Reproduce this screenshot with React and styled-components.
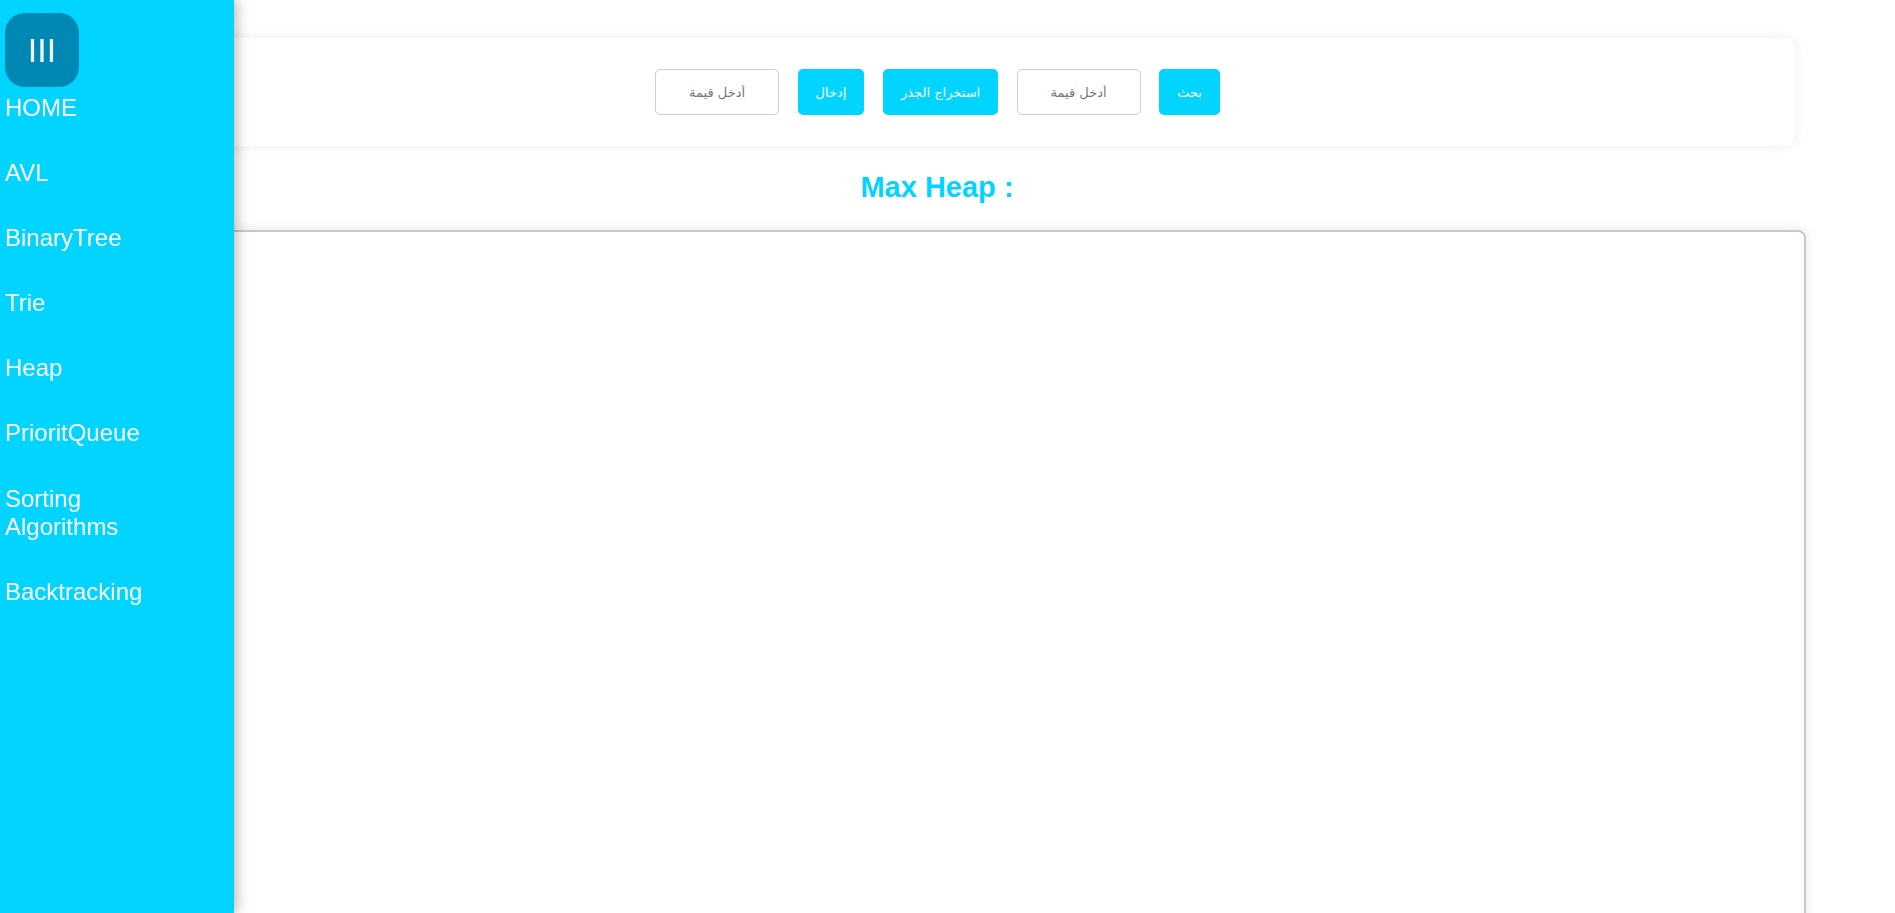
import React, { useState } from "react";
import styled, { createGlobalStyle } from "styled-components";

const GlobalStyle = createGlobalStyle`
  html, body {
    margin: 0;
    padding: 0;
    background: #fff;
    font-family: "Liberation Sans", Arial, "DejaVu Sans", sans-serif;
  }
  ::-webkit-scrollbar {
    width: 5px;
  }
  ::-webkit-scrollbar-track {
    background: #fff;
  }
  ::-webkit-scrollbar-thumb {
    background: #8a8a8a;
    border-radius: 3px;
  }
`;

const Sidebar = styled.aside`
  position: fixed;
  top: 0;
  left: 0;
  width: 234px;
  height: 100vh;
  background: #00d4ff;
  box-shadow: 3px 0 12px rgba(0, 0, 0, 0.28);
  padding: 13px 0 0 5px;
  box-sizing: border-box;
  z-index: 10;
`;

const MenuButton = styled.button`
  width: 74px;
  height: 74px;
  border: none;
  border-radius: 20px;
  background: #0088b4;
  color: #f4fbff;
  font-family: "Liberation Sans", Arial, sans-serif;
  font-size: 34px;
  line-height: 1;
  padding: 0;
  cursor: pointer;
  display: flex;
  align-items: center;
  justify-content: center;
`;

const NavList = styled.ul`
  list-style: none;
  margin: 7px 0 0;
  padding: 0;
  width: 170px;
  display: flex;
  flex-direction: column;
  gap: 36.3px;
`;

const NavLink = styled.a`
  display: block;
  color: #fff;
  font-size: 24px;
  line-height: 1.2;
  text-decoration: none;
  cursor: pointer;
`;

const Main = styled.main`
  padding: 38px 0 50px;
`;

const Toolbar = styled.div`
  margin: 0 100px 0 80px;
  padding: 31px 0 31px;
  background: #fff;
  border-radius: 10px;
  box-shadow: 0 0 12px rgba(0, 0, 0, 0.08);
  display: flex;
  justify-content: center;
  gap: 18.5px;
  direction: rtl;
`;

const ActionButton = styled.button`
  height: 46px;
  padding: 0 18px;
  border: none;
  border-radius: 5px;
  background: #00d4ff;
  color: #fff;
  font-family: "DejaVu Sans", "Liberation Sans", sans-serif;
  font-size: 13px;
  cursor: pointer;
`;

const ValueInput = styled.input`
  width: 124px;
  height: 46px;
  box-sizing: border-box;
  border: 1px solid #cfcfcf;
  border-radius: 5px;
  text-align: center;
  font-family: "DejaVu Sans", "Liberation Sans", sans-serif;
  font-size: 13px;
  color: #333;
  outline: none;
  &::placeholder {
    color: #777;
  }
`;

const Board = styled.section`
  margin: 0 89px 0 68px;
`;

const Heading = styled.h2`
  margin: 25px 0 26px;
  text-align: center;
  color: #00d4ff;
  font-size: 29px;
  font-weight: bold;
`;

const Canvas = styled.div`
  height: 2080px;
  border: 2px solid #c9c9c9;
  border-radius: 8px;
  box-shadow: 0 0 12px rgba(0, 0, 0, 0.1);
  background: #fff;
`;

const links = [
  "HOME",
  "AVL",
  "BinaryTree",
  "Trie",
  "Heap",
  "PrioritQueue",
  "Sorting Algorithms",
  "Backtracking",
];

const App = () => {
  const [searchValue, setSearchValue] = useState("");
  const [insertValue, setInsertValue] = useState("");

  return (
    <>
      <GlobalStyle />
      <Sidebar>
        <MenuButton>III</MenuButton>
        <NavList>
          {links.map((link) => (
            <li key={link}>
              <NavLink>{link}</NavLink>
            </li>
          ))}
        </NavList>
      </Sidebar>

      <Main>
        <Toolbar>
          <ActionButton>بحث</ActionButton>
          <ValueInput
            placeholder="أدخل قيمة"
            value={searchValue}
            onChange={(e) => setSearchValue(e.target.value)}
          />
          <ActionButton>استخراج الجذر</ActionButton>
          <ActionButton>إدخال</ActionButton>
          <ValueInput
            placeholder="أدخل قيمة"
            value={insertValue}
            onChange={(e) => setInsertValue(e.target.value)}
          />
        </Toolbar>

        <Board>
          <Heading>Max Heap :</Heading>
          <Canvas />
        </Board>
      </Main>
    </>
  );
};

export default App;
